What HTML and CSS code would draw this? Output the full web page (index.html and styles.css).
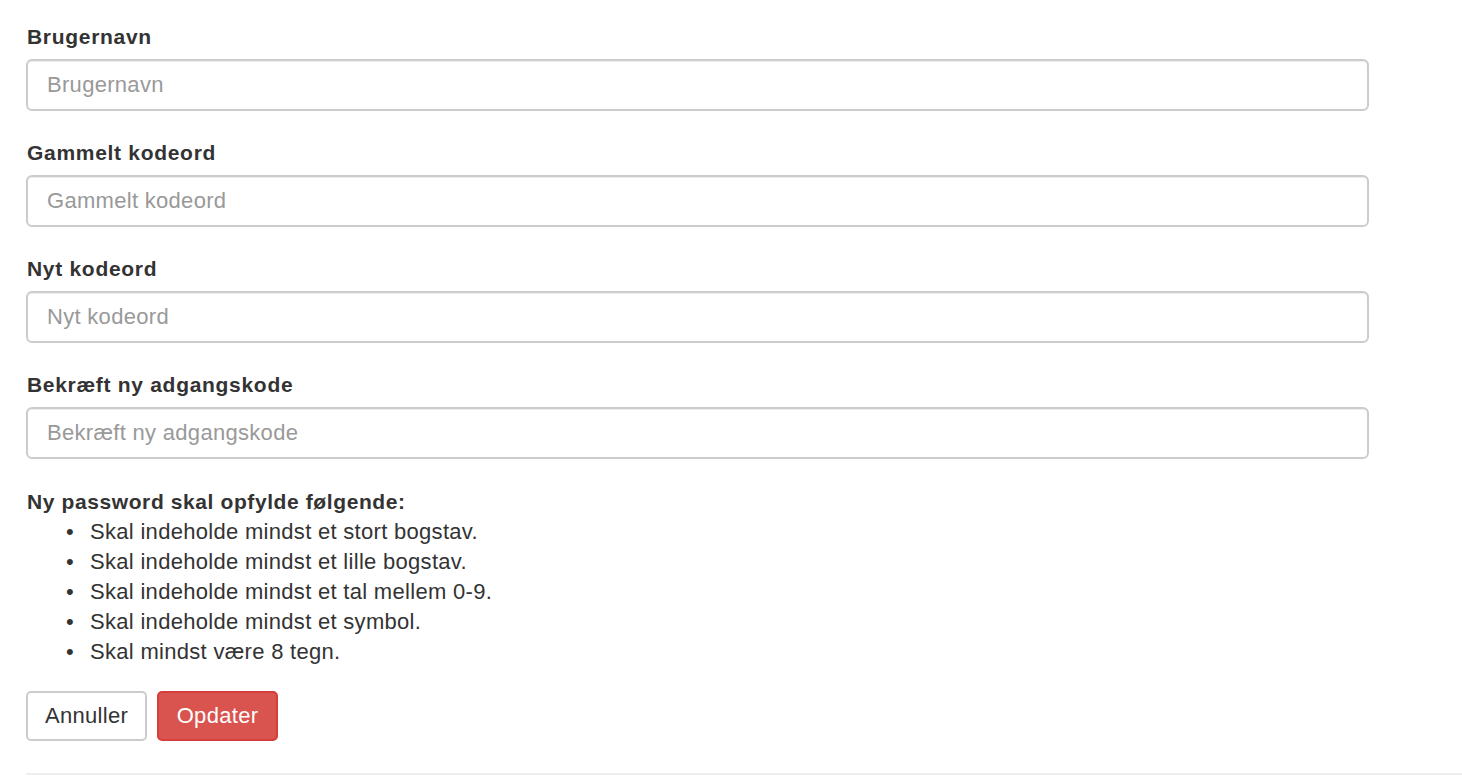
FILE: index.html
```html
<!DOCTYPE html>
<html lang="da">
<head>
  <meta charset="UTF-8">
  <meta name="viewport" content="width=device-width, initial-scale=1.0">
  <title>Skift kodeord</title>
  <link rel="stylesheet" href="styles.css">
</head>
<body>
  <div class="page">
    <form class="pw-form">
      <div class="form-group">
        <label for="username">Brugernavn</label>
        <input type="text" id="username" class="form-control" placeholder="Brugernavn">
      </div>
      <div class="form-group">
        <label for="oldPassword">Gammelt kodeord</label>
        <input type="password" id="oldPassword" class="form-control" placeholder="Gammelt kodeord">
      </div>
      <div class="form-group">
        <label for="newPassword">Nyt kodeord</label>
        <input type="password" id="newPassword" class="form-control" placeholder="Nyt kodeord">
      </div>
      <div class="form-group">
        <label for="confirmPassword">Bekræft ny adgangskode</label>
        <input type="password" id="confirmPassword" class="form-control" placeholder="Bekræft ny adgangskode">
      </div>

      <div class="rules">
        <strong>Ny password skal opfylde følgende:</strong>
        <ul>
          <li>Skal indeholde mindst et stort bogstav.</li>
          <li>Skal indeholde mindst et lille bogstav.</li>
          <li>Skal indeholde mindst et tal mellem 0-9.</li>
          <li>Skal indeholde mindst et symbol.</li>
          <li>Skal mindst være 8 tegn.</li>
        </ul>
      </div>

      <div class="actions">
        <button type="button" class="btn btn-default">Annuller</button>
        <button type="submit" class="btn btn-danger">Opdater</button>
      </div>
    </form>
    <hr>
  </div>
</body>
</html>
```

FILE: styles.css
```css
body {
  margin: 0;
  background: #fff;
  color: #333;
  font-family: "Liberation Sans", Arial, sans-serif;
  font-size: 22px;
  letter-spacing: 0.3px;
  line-height: 30px;
}

.page {
  padding: 23px 0 0 26px;
}

.pw-form {
  width: 1343px;
}

.form-group {
  margin-bottom: 28px;
}

label {
  display: block;
  font-size: 21px;
  font-weight: bold;
  letter-spacing: 0.7px;
  line-height: 28px;
  margin: 0 0 8px 1px;
}

.form-control {
  display: block;
  box-sizing: border-box;
  width: 100%;
  height: 52px;
  padding: 0 19px;
  border: 2px solid #ccc;
  border-radius: 6px;
  font-family: inherit;
  font-size: 22px;
  letter-spacing: 0.3px;
  color: #555;
  box-shadow: inset 0 1px 1px rgba(0,0,0,0.075);
}

.form-control::placeholder {
  color: #999;
}

.rules {
  margin: 26px 0 0 1px;
}

.rules strong {
  display: block;
  font-size: 21px;
  letter-spacing: 0.6px;
}

.rules ul {
  margin: 0;
  padding-left: 63px;
  list-style: none;
}

.rules li::before {
  content: "\2022";
  display: inline-block;
  width: 24px;
  margin-left: -24px;
}

.actions {
  display: flex;
  gap: 10px;
  margin-top: 24px;
}

.btn {
  box-sizing: border-box;
  width: 121px;
  height: 50px;
  padding: 0;
  border: 2px solid #ccc;
  border-radius: 5px;
  background: #fff;
  color: #333;
  font-family: inherit;
  font-size: 22px;
  letter-spacing: 0.3px;
}

.btn-danger {
  background: #d9534f;
  border-color: #d43f3a;
  color: #fff;
}

hr {
  margin: 32px 0 0 0;
  border: 0;
  border-top: 2px solid #eee;
}
```
